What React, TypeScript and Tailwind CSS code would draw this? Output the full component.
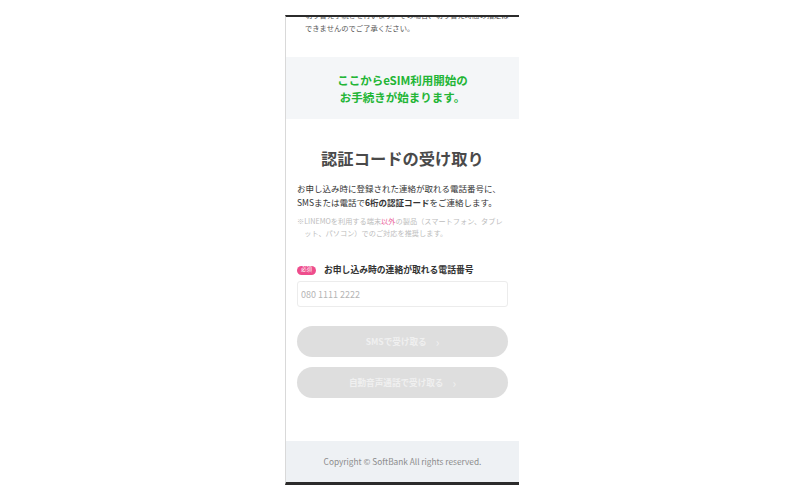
export default function App() {
  return (
    <div
      className="min-h-[499px] bg-white pt-[15px]"
      style={{ fontFamily: '"Noto Sans CJK JP", "Noto Sans", sans-serif' }}
    >
      <div className="ml-[285px] flex h-[470px] w-[234px] flex-col overflow-hidden border-t-2 border-b-[3px] border-l border-t-[#2b2b2b] border-b-[#2b2b2b] border-l-[#d9d9d9]">
        {/* ── Notice (scrolled) ───────────────────── */}
        <p className="mt-[-8.5px] whitespace-nowrap pl-[19px] pr-[8px] text-[7.3px] leading-[13px] text-[#555]">
          切り替え手続きを行います。その場合、切り替え時間の指定は
          <br />
          できませんのでご了承ください。
        </p>

        {/* ── Banner ──────────────────────────────── */}
        <div className="mt-[22.5px] bg-[#f4f6f8] pt-[14.5px] pb-[13.5px] text-center text-[11.5px] font-bold leading-[17px] text-[#22b535]">
          ここからeSIM利用開始の
          <br />
          お手続きが始まります。
        </div>

        {/* ── Code section ────────────────────────── */}
        <div className="px-[11px]">
          <h2 className="mt-[27px] text-center text-[16.3px] font-semibold leading-[24px] text-[#4a4a4a]">
            認証コードの受け取り
          </h2>
          <p className="mt-[11px] whitespace-nowrap text-[8.5px] leading-[14px] text-[#333]">
            お申し込み時に登録された連絡が取れる電話番号に、
            <br />
            SMSまたは電話で<span className="font-bold">6桁の認証コード</span>をご連絡します。
          </p>
          <p className="mt-[6px] pl-[1em] -indent-[1em] text-[7.2px] leading-[12px] text-[#bdbdbd]">
            ※LINEMOを利用する端末<span className="text-[#ea5a96]">以外</span>の製品（スマートフォン、タブレット、パソコン）でのご対応を推奨します。
          </p>

          <div className="mt-[24px] flex h-[14px] items-center gap-[8px]">
            <span className="flex h-[9px] w-[19px] items-center justify-center rounded-full bg-[#ee4d8c] text-[5.5px] leading-none text-white">
              必須
            </span>
            <span className="text-[8.8px] font-bold text-[#333]">
              お申し込み時の連絡が取れる電話番号
            </span>
          </div>
          <input
            type="tel"
            placeholder="080 1111 2222"
            className="mt-[4px] h-[26px] w-full rounded-[3px] border border-[#ececec] px-[3px] text-[9px] text-[#333] placeholder:text-[#b5b5b5] focus:outline-none"
          />

          <button className="mt-[19px] flex h-[31px] w-full items-center justify-center gap-[9px] rounded-full bg-[#dedede] text-[8.6px] font-bold text-[#f0f0f0]">
            SMSで受け取る
            <span className="text-[12px] font-normal leading-none">›</span>
          </button>
          <button className="mt-[10px] flex h-[31px] w-full items-center justify-center gap-[9px] rounded-full bg-[#dedede] text-[8.6px] font-bold text-[#f0f0f0]">
            自動音声通話で受け取る
            <span className="text-[12px] font-normal leading-none">›</span>
          </button>
        </div>

        {/* ── Footer ──────────────────────────────── */}
        <footer className="mt-auto flex h-[41px] items-center justify-center bg-[#eef1f4] text-[8.3px] text-[#8c8c8c]">
          Copyright © SoftBank All rights reserved.
        </footer>
      </div>
    </div>
  );
}
